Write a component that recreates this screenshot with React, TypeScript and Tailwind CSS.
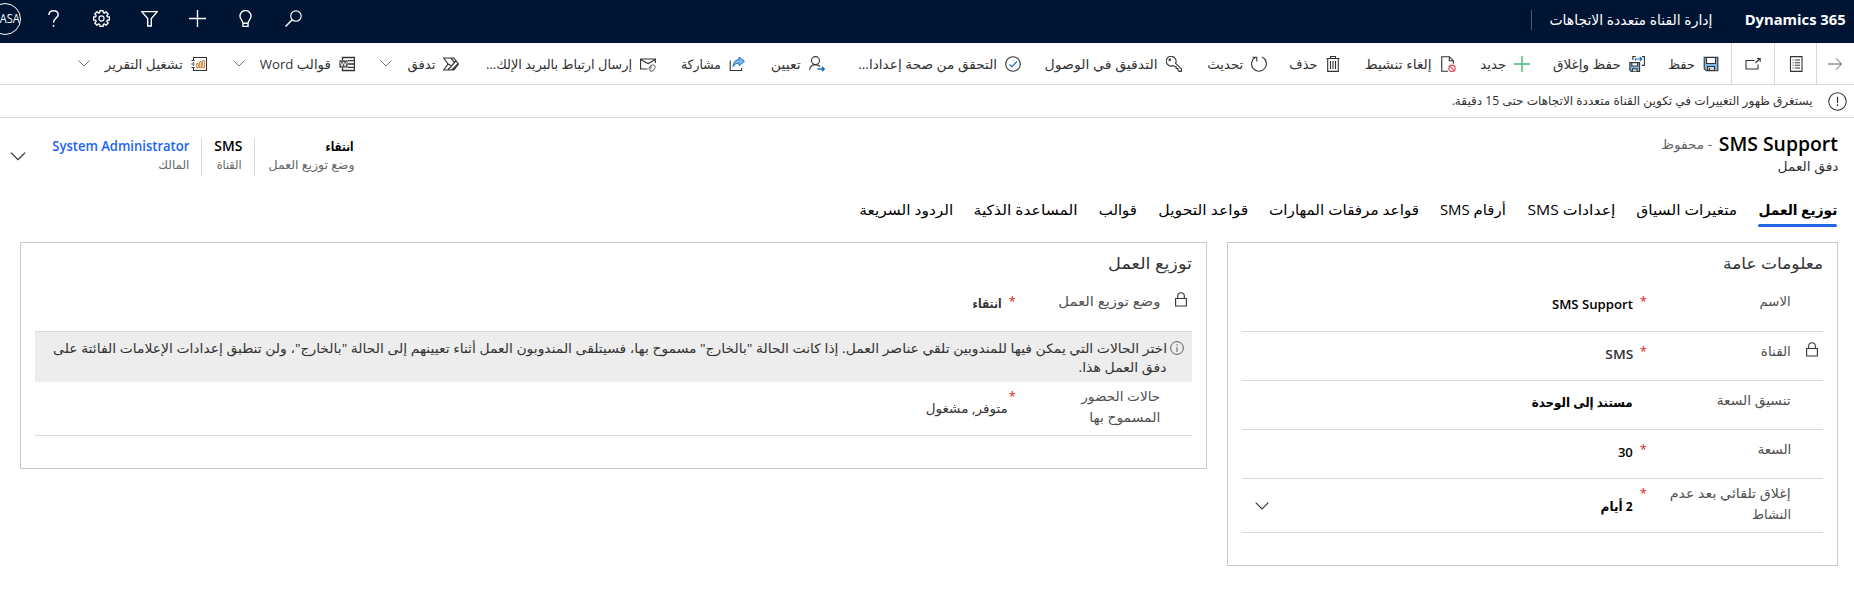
import { useLayoutEffect, useRef, useState, type ReactNode } from "react";

/** Single line of text squeezed or stretched horizontally to its box width. */
function Fit({ className = "", ltr = false, children }: { className?: string; ltr?: boolean; children: ReactNode }) {
  const box = useRef<HTMLDivElement>(null);
  const text = useRef<HTMLSpanElement>(null);
  const [scale, setScale] = useState(1);
  useLayoutEffect(() => {
    if (box.current && text.current && text.current.offsetWidth > 0) {
      const range = document.createRange();
      range.selectNodeContents(text.current);
      const natural = range.getBoundingClientRect().width / scale;
      setScale(box.current.clientWidth / natural);
    }
  }, []);
  return (
    <div ref={box} className={`shrink-0 whitespace-nowrap ${className}`}>
      <span ref={text} dir={ltr ? "ltr" : undefined} className="inline-block origin-right" style={{ transform: `scaleX(${scale})` }}>
        {children}
      </span>
    </div>
  );
}

function Svg({ children, className = "size-4", box = "0 0 16 16" }: { children: ReactNode; className?: string; box?: string }) {
  return (
    <svg viewBox={box} className={`shrink-0 ${className}`} fill="none" stroke="currentColor" strokeWidth="1.1">
      {children}
    </svg>
  );
}

const Chevron = ({ className = "w-3 h-[7px]" }: { className?: string }) => (
  <Svg box="0 0 12 7" className={className}>
    <path d="M.5.5 6 6 11.500.5" strokeWidth="1" />
  </Svg>
);

const Lock = () => (
  <Svg box="0 0 12 15" className="h-[15px] w-3">
    <path d="M.6 6.500h10.800v7.500H.6zM2.700 6.500V4a3.300 3.300 0 0 1 6.600 0v2.500" />
  </Svg>
);

const gear = Array.from({ length: 8 }, (_, i) => {
  const a = (i * Math.PI) / 4;
  const p = (r: number, d: number) => `${(8 + r * Math.cos(a + d)).toFixed(2)} ${(8 + r * Math.sin(a + d)).toFixed(2)}`;
  return `${p(5.7, -0.3)} ${p(7.6, -0.19)} ${p(7.6, 0.19)} ${p(5.7, 0.3)}`;
}).join(" ");

const topIcons: ReactNode[] = [
  <Svg key="search" className="size-[17px]"><circle cx="10.300" cy="5.700" r="4.900" /><path d="M6.800 9.200.5 15.500" strokeWidth="1.400" /></Svg>,
  <Svg key="bulb" className="size-[17px]"><path d="M5.600 12.500c0-2.600-2.800-3.500-2.800-6.800a5.200 5.200 0 0 1 10.400 0c0 3.300-2.800 4.200-2.800 6.800zM5.600 12.500v3h4.800v-3" strokeWidth="1.300" /></Svg>,
  <Svg key="plus" className="size-[17px]"><path d="M8 0v16M0 8h16" strokeWidth="1.300" /></Svg>,
  <Svg key="filter" className="size-[17px]"><path d="M.7 1.500h14.600L9.700 8v7H6.300V8z" strokeWidth="1.300" /></Svg>,
  <Svg key="gear" className="size-[17px]"><polygon points={gear} strokeLinejoin="round" strokeWidth="1.300" /><circle cx="8" cy="8" r="2.400" /></Svg>,
  <Svg key="help" className="size-[17px]"><path d="M3.700 4.600C3.700 2 5.500.7 8 .7s4.400 1.400 4.400 3.700C12.400 7.500 8 7.700 8 11.800M8 14v1.800" strokeWidth="1.400" /></Svg>,
];

const Floppy = () => (
  <Svg><path d="M1.200 1.200h13.600v13.600H3.200l-2-2z" fill="#7db7e6" /><path d="M3.500 1.500h9v6h-9z" fill="#fff" /><path d="M4.500 14.500v-4h7v4z" fill="#d8d8d8" /><path d="M6.500 12v2.500" /></Svg>
);

type Command = { label: string; slot: string; width: string; icon: ReactNode; menu?: boolean };

const commands: Command[] = [
  { label: "حفظ", slot: "w-[74px]", width: "w-[27px]", icon: <Floppy /> },
  {
    label: "حفظ وإغلاق", slot: "w-[115px]", width: "w-[68px]",
    icon: <Svg><path d="M.8 6.500h9.800v9H2.300L.8 14z" fill="#7db7e6" /><path d="M2.800 6.800h5.800V10H2.800z" fill="#fff" /><path d="M3.500 15.300v-2.600h4.600v2.600" fill="#ddd" /><path d="M3.800 4V.6h3M13 .6h2.400v8.800h-2.600" /><path d="M6.500 4.800V3h6M10.800 1 12.800 3l-2 2" stroke="#1669bb" strokeWidth="1.200" /></Svg>,
  },
  { label: "جديد", slot: "w-[74px]", width: "w-[26px]", icon: <Svg><path d="M8 0v16M0 8h16" stroke="#47b778" strokeWidth="1.400" /></Svg> },
  {
    label: "إلغاء تنشيط", slot: "w-[115px]", width: "w-[67px]",
    icon: <Svg><path d="M8 15.300H1.700V.7h7.600l4 4v3M9.300.7v4h4" /><circle cx="12" cy="12.300" r="3.200" stroke="#e04a55" strokeWidth="1.200" /><path d="m9.800 10 4.400 4.600" stroke="#e04a55" /></Svg>,
  },
  { label: "حذف", slot: "w-[74px]", width: "w-[28px]", icon: <Svg><path d="M1.500 2.500h13M5.500 2.500v-2h5v2M2.700 2.500v12.900h10.600V2.500M5.500 5v8M8 5v8M10.500 5v8" /></Svg> },
  { label: "تحديث", slot: "w-[85px]", width: "w-[36px]", icon: <Svg><path d="M11 1.100A7.400 7.400 0 1 1 4.500 1.300M1.500 1.200h4.300V5.400" /></Svg> },
  {
    label: "التدقيق في الوصول", slot: "w-[161px]", width: "w-[113px]",
    icon: <Svg><path d="M9.600 7.300a4.900 4.900 0 1 0-2.300 2.300l1.200 1.200h1.700v1.700h1.700v1.700l1.200 1.200h2.300v-2.500z" /><circle cx="3.800" cy="3.800" r=".8" /></Svg>,
  },
  { label: "التحقق من صحة إعدادا...", slot: "w-[196px]", width: "w-[139px]", icon: <Svg><circle cx="8" cy="8" r="7.300" /><path d="m4.500 8.300 2.400 2.400 5-5.200" stroke="#1669bb" /></Svg> },
  { label: "تعيين", slot: "w-[80px]", width: "w-[30px]", icon: <Svg><circle cx="6.500" cy="4.600" r="4" /><path d="M.6 14c.4-3.200 2.700-5.400 5.900-5.400 2 0 3.600.8 4.600 2.100" /><path d="M8.500 13h6.800M13 10.700l2.300 2.300-2.300 2.300" stroke="#1669bb" strokeWidth="1.300" /></Svg> },
  { label: "مشاركة", slot: "w-[89px]", width: "w-[40px]", icon: <Svg><path d="M1.200 4.500v10h11.500V12" /><path d="M10 1l5.500 4.300L10 9.700V7.200C7.500 7 5.300 8.200 4 10.700 4.200 6.300 6.300 3.700 10 3.500z" fill="#7db7e6" stroke="#1669bb" strokeWidth=".9" /></Svg> },
  {
    label: "إرسال ارتباط بالبريد الإلك...", slot: "w-[197px]", width: "w-[146px]",
    icon: <Svg><path d="M7.500 13H.6V3h14.800v4M.6 3.500 8 7.500l7.400-4" /><path d="m8.500 12.500 2.500-3c2.300-2 5.300.7 3.700 3l-2 2.300c-1.800 1.300-3.900-.6-2.400-2.400l1.700-1.700" stroke="#777" /></Svg>,
  },
  { label: "تدفق", slot: "w-[104px]", width: "w-[28px]", menu: true, icon: <Svg><path d="M.7 2h10.200l4.500 6-4.500 6H.7L5 8zM4.800 14 13 4.800M9 14l5.800-6M5 8l3.500 2M8 2l3.500 4.300" strokeWidth="1.200" /></Svg> },
  {
    label: "قوالب Word", slot: "w-[148px]", width: "w-[71px]", menu: true,
    icon: <Svg><path d="M3.500 4.500V1.500h12v13h-12v-3M9 4.700h6.500M9 8h6.500M9 11.300h6.500" strokeWidth="1.300" /><path d="M.3 4.300h8.400v7.400H.3z" fill="#555" stroke="none" /><path d="m1.500 6 1.300 4.200L4.500 6l1.600 4.200L7.500 6" stroke="#fff" strokeWidth=".9" /></Svg>,
  },
  {
    label: "تشغيل التقرير", slot: "w-[130px]", width: "w-[78px]", menu: true,
    icon: <Svg><path d="M2.500 4V1.500h13v13h-13V12M2.500 6v1M2.500 9v1M.5 4.500h3M.5 8h3M.5 11.500h3" /><path d="M5.700 7.500h1.600V12H5.700zM8.700 5.500h1.600V12H8.700zM11.700 4.500h1.600V12h-1.600z" stroke="#c47a22" strokeWidth=".9" /></Svg>,
  },
];

const tabs = [
  ["توزيع العمل", "w-[79px]"],
  ["متغيرات السياق", "w-[101px]"],
  ["إعدادات SMS", "w-[88px]"],
  ["أرقام SMS", "w-[66px]"],
  ["قواعد مرفقات المهارات", "w-[150px]"],
  ["قواعد التحويل", "w-[90px]"],
  ["قوالب", "w-[38px]"],
  ["المساعدة الذكية", "w-[104px]"],
  ["الردود السريعة", "w-[94px]"],
];

type RowProps = {
  height: string;
  labels: [string, string][];
  value: string;
  valueClass: string;
  required?: boolean;
  locked?: boolean;
  menu?: boolean;
  starGap?: string;
  valuePad?: string;
};

function Row({ height, labels, value, valueClass, required, locked, menu, starGap = "w-[14px]", valuePad = "pt-3" }: RowProps) {
  const twoLines = labels.length > 1;
  return (
    <div className={`flex border-b border-[#d8d8d8] ${height}`}>
      <div className="w-8 shrink-0 pt-[10px] pr-[5px] text-[#333]">{locked && <Lock />}</div>
      <div className={`w-[144px] shrink-0 text-[13px] text-[#505050] ${twoLines ? "pt-1 leading-[21px]" : "pt-[9px] leading-5"}`}>
        {labels.map(([text, width]) => (
          <Fit key={text} className={width}>{text}</Fit>
        ))}
      </div>
      <div className={`shrink-0 text-[13px] leading-4 text-[#e02020] ${twoLines ? "pt-[6px]" : "pt-[11px]"} ${starGap}`}>{required && "*"}</div>
      <div className={`grow text-[13px] leading-5 ${valuePad}`}>
        <Fit className={valueClass}>{value}</Fit>
      </div>
      {menu && <div className="pt-[23px] pl-[13px] text-[#333]"><Chevron className="h-2 w-[14px]" /></div>}
    </div>
  );
}

export default function App() {
  return (
    <div dir="rtl" className="h-[598px] w-[1854px] overflow-hidden bg-white font-['Open_Sans','DejaVu_Sans',sans-serif] text-[13px] text-[#333]">
      <header className="flex h-[43px] justify-between overflow-hidden bg-[#001433] text-white">
        <div className="flex h-[39px] items-center pr-2">
          <Fit ltr className="w-[101px] text-[15px] font-bold">Dynamics 365</Fit>
          <Fit className="mr-[33px] w-[163px] text-[14px]">إدارة القناة متعددة الاتجاهات</Fit>
          <div className="mr-[17px] h-5 w-px bg-[#4d5b71]" />
        </div>
        <div className="-ml-[19px] flex h-[36px] items-center">
          {topIcons.map((icon, i) => (
            <div key={i} className="flex w-12 justify-center">{icon}</div>
          ))}
          <div className="flex w-12 shrink-0 justify-center">
            <div className="mt-[2px] flex size-8 items-center justify-start rounded-full border border-white">
              <Fit ltr className="w-[20px] text-[12px]">ASA</Fit>
            </div>
          </div>
        </div>
      </header>

      <nav className="flex h-[42px] border-b border-[#d8d8d8]">
        <div className="flex w-[37px] items-center justify-center pr-px">
          <Svg className="h-[14px] w-[14px]"><path d="M0 8h15M9 1.500 15.500 8 9 14.500" stroke="#555" /></Svg>
        </div>
        <div className="flex w-[43px] items-center justify-center border-x border-[#d8d8d8]">
          <Svg><path d="M2.500.6h11.500v14.800H2.500zM7 4h5M7 6.700h5M7 9.300h5M7 12h5M4.500 4h1M4.500 6.700h1M4.500 9.300h1M4.500 12h1" /></Svg>
        </div>
        <div className="flex w-[43px] items-center justify-center border-l border-[#d8d8d8]">
          <Svg><path d="M9.500 4.500h-8.500v8.500h12V8.500M10.500 7l4.500-4.500M12 2.500h3.200v3.200" /></Svg>
        </div>
        <div className="flex pr-3 text-[13px]">
          {commands.map((c) => (
            <div key={c.label} className={`flex shrink-0 items-center ${c.slot}`}>
              {c.icon}
              <Fit className={`mt-[2px] mr-2 ${c.width}`}>{c.label}</Fit>
              {c.menu && <div className="mr-[15px] text-[#777]"><Chevron /></div>}
            </div>
          ))}
        </div>
      </nav>

      <div className="flex h-[33px] items-center border-b border-[#d8d8d8] pr-[7px]">
        <Svg className="size-[19px]" box="0 0 20 20"><circle cx="10" cy="10" r="9.200" /><path d="M10 5v6.500M10 13v1.800" strokeWidth="1.300" /></Svg>
        <Fit className="mr-[15px] w-[361px] text-[12px]">يستغرق ظهور التغييرات في تكوين القناة متعددة الاتجاهات حتى 15 دقيقة.</Fit>
      </div>

      <section className="flex h-[76px] justify-between pr-4">
        <div className="pt-[13px]">
          <div className="flex h-[27px] items-center">
            <Fit ltr className="w-[119px] text-[19px] font-semibold text-black">SMS Support</Fit>
            <Fit className="mr-[7px] w-[51px] text-[13px] text-[#666]">- محفوظ</Fit>
          </div>
          <Fit className="w-[61px] text-[13px] leading-4">دفق العمل</Fit>
        </div>
        <div className="flex pt-5 pl-[10px]">
          <div className="h-[38px] pl-[13px]">
            <Fit className="w-[28px] text-[13px] leading-4 font-bold text-black">انتقاء</Fit>
            <Fit className="w-[86px] text-[12px] leading-[21px] text-[#666]">وضع توزيع العمل</Fit>
          </div>
          <div className="h-[38px] border-r border-[#d8d8d8] pr-3 pl-3">
            <Fit ltr className="w-[28px] text-[14px] leading-4 font-semibold text-black">SMS</Fit>
            <Fit className="w-[25px] text-[12px] leading-[21px] text-[#666]">القناة</Fit>
          </div>
          <div className="h-[38px] border-r border-[#d8d8d8] pr-3 pl-[26px]">
            <Fit ltr className="w-[137px] text-[14px] leading-4 font-semibold text-[#1a64f5]">System Administrator</Fit>
            <Fit className="w-[31px] text-[12px] leading-[21px] text-[#666]">المالك</Fit>
          </div>
          <div className="pt-[14px]"><Chevron className="h-[9px] w-4" /></div>
        </div>
      </section>

      <div className="flex h-[48px] gap-[21px] pr-[17px] text-[14px] text-black">
        {tabs.map(([label, width], i) => (
          <div key={label} className="flex flex-col">
            <Fit className={`h-[30px] leading-[31px] ${width} ${i === 0 ? "font-bold" : ""}`}>{label}</Fit>
            {i === 0 && <div className="h-[3px] rounded-sm bg-[#2266e3]" />}
          </div>
        ))}
      </div>

      <main className="flex items-start gap-5 pr-4">
        <section className="h-[324px] w-[611px] border border-[#c8c8c8] px-[14px]">
          <Fit className="mt-2 h-6 w-[100px] text-[16px] leading-6">معلومات عامة</Fit>
          <div className="pt-[7px]">
            <Row height="h-[50px]" labels={[["الاسم", "w-[31px]"]]} required value="SMS Support" valueClass="w-[81px] font-semibold text-black" />
            <Row height="h-[49px]" labels={[["القناة", "w-[30px]"]]} locked required value="SMS" valueClass="w-[28px] font-semibold" />
            <Row height="h-[49px]" labels={[["تنسيق السعة", "w-[74px]"]]} value="مستند إلى الوحدة" valueClass="w-[101px] font-bold text-black" valuePad="pt-[11px]" />
            <Row height="h-[49px]" labels={[["السعة", "w-[34px]"]]} required value="30" valueClass="w-[15px] font-semibold text-black" />
            <Row height="h-[54px]" labels={[["إغلاق تلقائي بعد عدم", "w-[121px]"], ["النشاط", "w-[39px]"]]} required menu value="2 أيام" valueClass="w-[32px] font-bold text-black" valuePad="pt-[17px]" />
          </div>
        </section>

        <section className="h-[227px] w-[1187px] border border-[#c8c8c8] px-[14px]">
          <Fit className="mt-2 h-6 w-[84px] text-[16px] leading-6">توزيع العمل</Fit>
          <div className="pt-[7px]">
            <Row height="h-[50px]" labels={[["وضع توزيع العمل", "w-[102px]"]]} locked required value="انتقاء" valueClass="w-[29px] font-bold" valuePad="pt-[11px]" />
            <div className="flex h-[50px] bg-[#ededed] pt-[7px] pr-2">
              <Svg className="mt-[2px] size-[14px] text-[#555]"><circle cx="8" cy="8" r="7.300" /><path d="M8 7v5.500M8 3.700v1.600" /></Svg>
              <div className="mr-[3px] text-[13px] leading-[19px]">
                <Fit className="w-[1114px]">اختر الحالات التي يمكن فيها للمندوبين تلقي عناصر العمل. إذا كانت الحالة "بالخارج" مسموح بها، فسيتلقى المندوبون العمل أثناء تعيينهم إلى الحالة "بالخارج"، ولن تنطبق إعدادات الإعلامات الفائتة على</Fit>
                <Fit className="w-[88px]">دفق العمل هذا.</Fit>
              </div>
            </div>
            <Row height="h-[54px]" labels={[["حالات الحضور", "w-[79px]"], ["المسموح بها", "w-[71px]"]]} required starGap="w-[8px]" value="متوفر, مشغول" valueClass="w-[82px]" valuePad="pt-4" />
          </div>
        </section>
      </main>
    </div>
  );
}
